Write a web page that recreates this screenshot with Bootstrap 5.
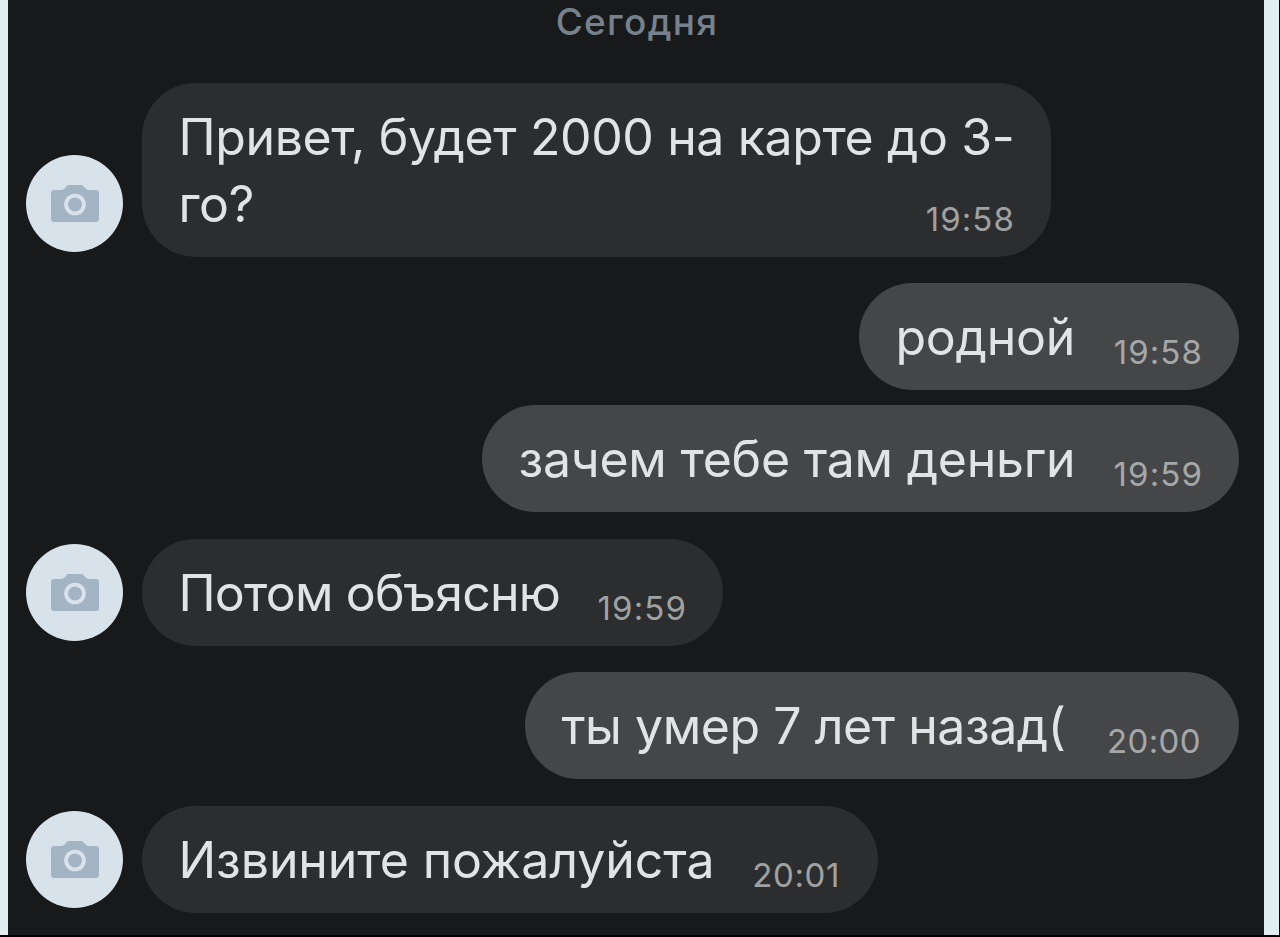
<!DOCTYPE html>
<html lang="ru">
<head>
  <meta charset="UTF-8">
  <meta name="viewport" content="width=device-width, initial-scale=1">
  <title>Сообщения</title>
  <link href="https://cdn.jsdelivr.net/npm/bootstrap@5.3.3/dist/css/bootstrap.min.css" rel="stylesheet">
  <style>
    body {
      height: 937px;
      background: #000;
      font-family: Inter, "Liberation Sans", sans-serif;
    }
    .chat-page {
      height: 935px;
      background: #18191a;
      border-left: 8px solid #e0eeef;
      border-right: 15px solid #e0eeef;
      margin-right: 1px;
      padding: 0 25px 0 18px;
    }
    .chat-day {
      height: 83px;
      padding: 2px 0 0 9px;
      font-size: 37px;
      line-height: 40px;
      font-weight: 500;
      letter-spacing: 1.3px;
      color: #76818d;
    }
    .avatar {
      width: 97px;
      height: 97px;
      margin: 0 19px 5px 0;
      background: #d8e2ea;
    }
    .bubble {
      padding: 21px 37px 19.5px 36.5px;
      border-radius: 54px;
      color: #e1e3e6;
      font-size: 50px;
      line-height: 66.5px;
    }
    .bubble-in { background: #2c2d2e; }
    .bubble-out { background: #454647; }
    .bubble-text { white-space: nowrap; }
    .bubble-time {
      font-size: 33px;
      line-height: 33px;
      letter-spacing: 1.1px;
      margin-right: -1px;
      margin-bottom: 1.5px;
      color: #a0a1a3;
    }
    .bubble-out .bubble-time { color: #a6a7a9; }
    .gap-msg { margin-top: 26.5px; }
    .gap-same { margin-top: 15px; }

    /* bubble widths and text tracking */
    .w-hello { width: 909px; }
    .w-hello .bubble-text { letter-spacing: -.38px; }
    .w-hello .bubble-time { margin-left: -100px; }
    .w-rodnoy { width: 380px; }
    .w-rodnoy .bubble-text { letter-spacing: -.25px; }
    .w-zachem { width: 757px; }
    .w-zachem .bubble-text { letter-spacing: -.24px; }
    .w-potom { width: 581px; }
    .w-potom .bubble-text { letter-spacing: -.8px; }
    .w-umer { width: 714px; }
    .w-umer .bubble-text { letter-spacing: -.45px; }
    .w-umer .bubble-time { letter-spacing: .4px; margin-right: 1px; }
    .w-izvinite { width: 736px; }
    .w-izvinite .bubble-text { letter-spacing: -.08px; }
    .w-izvinite .bubble-time { letter-spacing: .6px; margin-right: 1px; }
  </style>
</head>
<body class="overflow-hidden">

<svg class="d-none">
  <symbol id="camera" viewBox="0 0 48 37">
    <path fill="#a3b4c5" fill-rule="evenodd" d="M3 5h7.500c1.500 0 2.200-.5 3-1.400l1.800-2C16.300.4 17 0 18 0h12c1 0 1.700.4 2.700 1.600l1.800 2c.8.900 1.500 1.400 3 1.400H45c2 0 3 1.200 3 3v26c0 2-1 3-3 3H3c-2 0-3-1-3-3V8c0-1.800 1-3 3-3z"/>
    <circle cx="24" cy="19.500" r="8.900" fill="none" stroke="#dae3ec" stroke-width="3.800"/>
  </symbol>
</svg>

<main class="chat-page d-flex flex-column">
  <div class="chat-day text-center">Сегодня</div>

  <div class="d-flex align-items-end">
    <div class="avatar rounded-circle d-flex align-items-center justify-content-center flex-shrink-0">
      <svg width="48" height="37"><use href="#camera"/></svg>
    </div>
    <div class="bubble bubble-in w-hello d-flex align-items-end justify-content-between">
      <div class="bubble-text">Привет, будет 2000 на карте до 3-<br>го?</div>
      <div class="bubble-time">19:58</div>
    </div>
  </div>

  <div class="d-flex justify-content-end gap-msg">
    <div class="bubble bubble-out w-rodnoy d-flex align-items-end justify-content-between">
      <div class="bubble-text">родной</div>
      <div class="bubble-time">19:58</div>
    </div>
  </div>

  <div class="d-flex justify-content-end gap-same">
    <div class="bubble bubble-out w-zachem d-flex align-items-end justify-content-between">
      <div class="bubble-text">зачем тебе там деньги</div>
      <div class="bubble-time">19:59</div>
    </div>
  </div>

  <div class="d-flex align-items-end gap-msg">
    <div class="avatar rounded-circle d-flex align-items-center justify-content-center flex-shrink-0">
      <svg width="48" height="37"><use href="#camera"/></svg>
    </div>
    <div class="bubble bubble-in w-potom d-flex align-items-end justify-content-between">
      <div class="bubble-text">Потом объясню</div>
      <div class="bubble-time">19:59</div>
    </div>
  </div>

  <div class="d-flex justify-content-end gap-msg">
    <div class="bubble bubble-out w-umer d-flex align-items-end justify-content-between">
      <div class="bubble-text">ты умер 7 лет назад(</div>
      <div class="bubble-time">20:00</div>
    </div>
  </div>

  <div class="d-flex align-items-end gap-msg">
    <div class="avatar rounded-circle d-flex align-items-center justify-content-center flex-shrink-0">
      <svg width="48" height="37"><use href="#camera"/></svg>
    </div>
    <div class="bubble bubble-in w-izvinite d-flex align-items-end justify-content-between">
      <div class="bubble-text">Извините пожалуйста</div>
      <div class="bubble-time">20:01</div>
    </div>
  </div>
</main>

<script src="https://cdn.jsdelivr.net/npm/bootstrap@5.3.3/dist/js/bootstrap.bundle.min.js"></script>
</body>
</html>
